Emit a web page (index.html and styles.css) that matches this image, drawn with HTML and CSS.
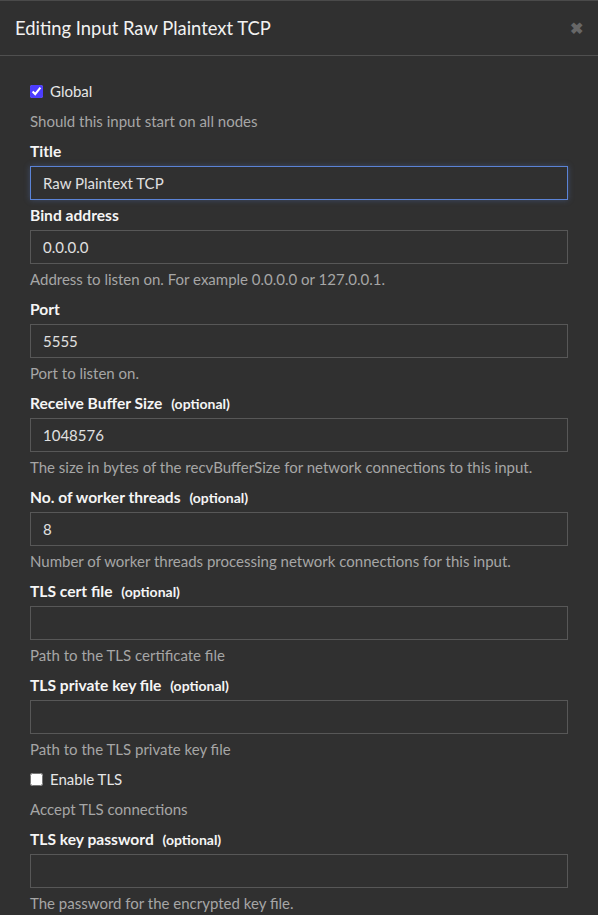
FILE: index.html
```html
<!DOCTYPE html>
<html>
<head>
<meta charset="utf-8">
<link rel="stylesheet" href="styles.css">
</head>
<body>
<div class="modal">
  <div class="modal-header">
    <h4 class="modal-title">Editing Input Raw Plaintext TCP</h4>
    <span class="close">&#x2716;</span>
  </div>
  <div class="modal-body">
    <div class="group">
      <label class="check"><input type="checkbox" checked> <span>Global</span></label>
      <p class="help">Should this input start on all nodes</p>
    </div>
    <div class="group">
      <label class="label">Title</label>
      <input class="field focus" type="text" value="Raw Plaintext TCP">
    </div>
    <div class="group">
      <label class="label">Bind address</label>
      <input class="field" type="text" value="0.0.0.0">
      <p class="help">Address to listen on. For example 0.0.0.0 or 127.0.0.1.</p>
    </div>
    <div class="group">
      <label class="label">Port</label>
      <input class="field" type="text" value="5555">
      <p class="help">Port to listen on.</p>
    </div>
    <div class="group">
      <label class="label">Receive Buffer Size <span class="opt">(optional)</span></label>
      <input class="field" type="text" value="1048576">
      <p class="help">The size in bytes of the recvBufferSize for network connections to this input.</p>
    </div>
    <div class="group">
      <label class="label">No. of worker threads <span class="opt">(optional)</span></label>
      <input class="field" type="text" value="8">
      <p class="help">Number of worker threads processing network connections for this input.</p>
    </div>
    <div class="group">
      <label class="label">TLS cert file <span class="opt">(optional)</span></label>
      <input class="field" type="text" value="">
      <p class="help">Path to the TLS certificate file</p>
    </div>
    <div class="group">
      <label class="label">TLS private key file <span class="opt">(optional)</span></label>
      <input class="field" type="text" value="">
      <p class="help">Path to the TLS private key file</p>
    </div>
    <div class="group">
      <label class="check"><input type="checkbox"> <span>Enable TLS</span></label>
      <p class="help">Accept TLS connections</p>
    </div>
    <div class="group">
      <label class="label">TLS key password <span class="opt">(optional)</span></label>
      <input class="field" type="password" value="">
      <p class="help">The password for the encrypted key file.</p>
    </div>
  </div>
</div>
</body>
</html>
```

FILE: styles.css
```css
html, body {
  margin: 0;
  padding: 0;
  background: #303030;
}
body {
  font-family: Lato, "Open Sans", sans-serif;
  font-size: 15px;
  line-height: 20px;
  color: #e6e6e6;
  overflow: hidden;
}
.modal {
  width: 598px;
}
.modal-header {
  display: flex;
  align-items: center;
  justify-content: space-between;
  border-top: 1px solid #4a4a4a;
  border-bottom: 1px solid #4f4f4f;
  padding: 14px 15px 14px 15px;
}
.modal-title {
  margin: 0;
  font-size: 18.4px;
  line-height: 26px;
  font-weight: 400;
  color: #f2f2f2;
}
.close {
  color: #676767;
  font-size: 16px;
  line-height: 26px;
  font-weight: bold;
}
.modal-body {
  padding: 25px 30px 0 30px;
}
.group {
  display: flex;
  flex-direction: column;
  margin-bottom: 5px;
}
.check {
  display: flex;
  align-items: center;
  height: 20px;
  margin-bottom: 5px;
  color: #e6e6e6;
}
.check input {
  width: 13px;
  height: 13px;
  margin: 0 7px 0 0;
  accent-color: #4d3dff;
}
.label {
  display: block;
  height: 20px;
  font-size: 15.6px;
  font-weight: 700;
  color: #f5f5f5;
  margin-bottom: 5px;
  line-height: 20px;
}
.opt {
  font-size: 14px;
  line-height: 1;
  margin-left: 5px;
}
.help {
  margin: 5px 0 5px 0;
  color: #a6a6a6;
}
.field {
  box-sizing: border-box;
  width: 538px;
  height: 34px;
  margin: 0;
  padding: 6px 12px;
  background: #303030;
  border: 1px solid #575757;
  border-radius: 0;
  color: #e0e0e0;
  font-family: inherit;
  font-size: 15px;
  outline: none;
}
.field.focus {
  border-color: #5b83d6;
  box-shadow: 0 0 6px rgba(91, 131, 214, 0.35);
}
```
